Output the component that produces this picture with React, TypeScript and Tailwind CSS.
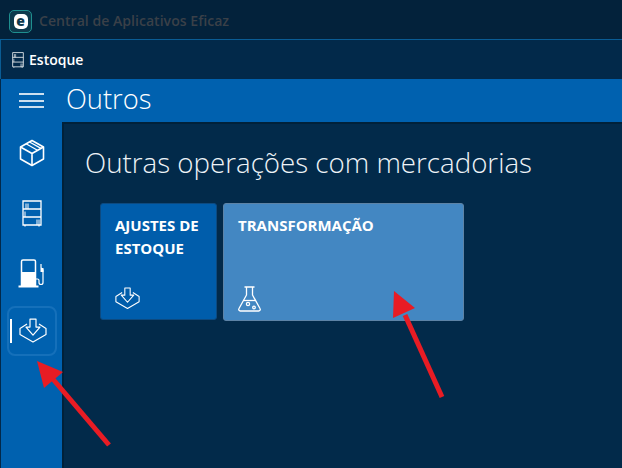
const CubeIcon = () => (
  <svg width="26" height="28" viewBox="0 0 26 28" fill="none" stroke="white" strokeWidth="1.6" strokeLinejoin="round">
    <path d="M13 1.5 24.5 8v12L13 26.5 1.5 20V8z" />
    <path d="M1.5 8 13 14.5 24.5 8M13 14.5v12" />
    <path d="M7 4.8 18.5 11.2M10.5 3 22 9.4" strokeWidth="1.3" />
  </svg>
);

const ShelfIcon = ({ small }: { small?: boolean }) => (
  <svg width={small ? 12 : 20} height={small ? 16 : 27} viewBox="0 0 20 27" fill="none" stroke="white" strokeWidth="1.3">
    <path d="M1 1h18v24H1zM1 9h18M1 17h18M3 25v1.5M17 25v1.5" />
    <path d="M4 3.5V9M6 3.5V9M15 19.5V25M17 19.5V25" strokeWidth="1" />
    <path d="M3 11.5V17" strokeWidth="1" />
  </svg>
);

const PumpIcon = () => (
  <svg width="27" height="29" viewBox="0 0 27 29" fill="none" stroke="white" strokeWidth="1.5">
    <path d="M3.5 27V2.5A1.5 1.5 0 0 1 5 1h11a1.5 1.5 0 0 1 1.5 1.5V27" />
    <path d="M0.5 27.5h20" strokeWidth="2" />
    <path d="M4 13h13v14H4z" fill="white" stroke="none" />
    <path d="M17.5 20h2a1.5 1.5 0 0 1 1.5 1.5v2a2 2 0 0 0 4 0V11l-2-2.5V5" strokeWidth="1.2" />
    <path d="M22.5 9h3v4h-3z" fill="white" stroke="none" />
  </svg>
);

const DownloadBoxIcon = ({ size = 28 }: { size?: number }) => (
  <svg width={size} height={size * 0.9} viewBox="0 0 28 25" fill="none" stroke="white" strokeWidth="1.2" strokeLinejoin="round">
    <path d="M8 6 1 10.5v6L14 24l13-7.5v-6L20 6" />
    <path d="M11 1h6v8h4l-7 8-7-8h4z" />
  </svg>
);

const FlaskIcon = () => (
  <svg width="23" height="26" viewBox="0 0 23 26" fill="none" stroke="white" strokeWidth="1.3" strokeLinejoin="round">
    <path d="M6.5 1h10M8.5 1v8L1 22.5A1.6 1.6 0 0 0 2.4 25h18.2a1.6 1.6 0 0 0 1.4-2.5L14.5 9V1" />
    <path d="M5.5 14.5h12" />
    <circle cx="10" cy="18" r="1.6" />
    <circle cx="16" cy="21.5" r="1.3" />
  </svg>
);

const Logo = () => (
  <div className="flex h-[23px] w-[23px] items-center justify-center rounded-[5px] border border-[#1f8f8f] bg-[#0e3a4c]">
    <span className="flex h-[15px] w-[14px] items-center justify-center rounded-[5px] bg-white text-[14px] leading-none font-extrabold text-[#0e3a4c]">
      e
    </span>
  </div>
);

const Arrow = ({ x1, y1, x2, y2, tip }: { x1: number; y1: number; x2: number; y2: number; tip: string }) => (
  <>
    <path d={`M${x1} ${y1}L${x2} ${y2}`} stroke="#e81c24" strokeWidth="5" />
    <polygon points={tip} fill="#e81c24" />
  </>
);

export default function App() {
  return (
    <div className="relative flex h-[468px] w-[622px] flex-col overflow-hidden bg-[#022a4a] font-['Open_Sans',sans-serif] text-white">
      <div className="flex h-[39px] shrink-0 items-center gap-[3px] bg-[#03223b] pt-[3px] pl-[9px]">
        <Logo />
        <span className="ml-[4px] text-[14.1px] font-semibold text-[#3a4048]">Central de Aplicativos Eficaz</span>
      </div>

      <div className="flex h-[40px] shrink-0 items-center gap-[5px] border-t border-l border-[#0a5c94] bg-[#02294a] pl-[11px]">
        <ShelfIcon small />
        <span className="text-[14px] font-semibold">Estoque</span>
      </div>

      <div className="flex h-[43px] shrink-0 items-center border-l border-[#02294a] bg-[#0061af]">
        <div className="flex w-[65px] flex-col gap-[4.5px] pl-[18px]">
          <span className="h-[2px] w-[25px] bg-white/80" />
          <span className="h-[2px] w-[25px] bg-white/80" />
          <span className="h-[2px] w-[25px] bg-white/80" />
        </div>
        <span className="pb-[4px] text-[27.3px] leading-none font-light">Outros</span>
      </div>

      <div className="flex min-h-0 flex-1">
        <div className="flex w-[62px] shrink-0 flex-col items-center border-l border-[#02294a] bg-[#0061af] pt-[17px]">
          <CubeIcon />
          <div className="mt-[33px]"><ShelfIcon /></div>
          <div className="mt-[32px]"><PumpIcon /></div>
          <div className="relative mt-[18px] flex h-[50px] w-[50px] items-center justify-center rounded-[8px] border-2 border-[#1570ba]">
            <span className="absolute top-[11px] left-[1px] h-[24px] w-[2px] bg-white" />
            <div className="ml-[2px]"><DownloadBoxIcon /></div>
          </div>
        </div>

        <div className="flex-1 border-t-2 border-l-2 border-[#012139] pt-[23px] pl-[21px]">
          <h1 className="text-[27.7px] leading-[30px] font-light text-[#eef3f7]">Outras operações com mercadorias</h1>
          <div className="mt-[26px] ml-[15px] flex gap-[6px]">
            <div className="flex h-[117px] w-[117px] flex-col justify-between rounded-[3px] border border-[#0d4a80] bg-[#005dab] pt-[10px] pr-1 pb-[10px] pl-[14px]">
              <div className="text-[15px] leading-[23px] font-bold">AJUSTES DE<br />ESTOQUE</div>
              <DownloadBoxIcon size={25} />
            </div>
            <div className="flex h-[118px] w-[241px] flex-col justify-between rounded-[3px] border border-[#5d83a6] bg-[#4387c2] pt-[10px] pr-2 pb-[8px] pl-[14px]">
              <div className="text-[15px] leading-[23px] font-bold">TRANSFORMAÇÃO</div>
              <FlaskIcon />
            </div>
          </div>
        </div>
      </div>

      <svg className="absolute top-0 left-0" width="622" height="468" viewBox="0 0 622 468">
        <Arrow x1={109} y1={445} x2={52} y2={378} tip="37,361 63,372 44,388" />
        <Arrow x1={442} y1={397} x2={405} y2={315} tip="394,291 415,308 393,318" />
      </svg>
    </div>
  );
}
